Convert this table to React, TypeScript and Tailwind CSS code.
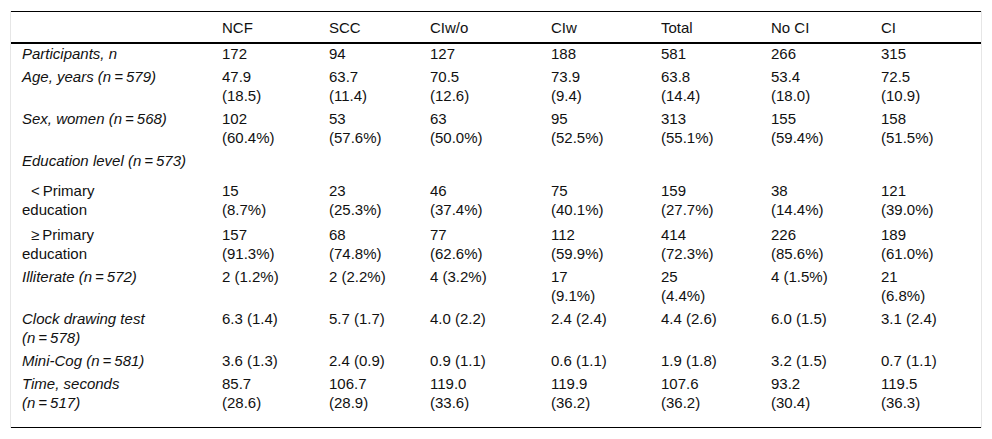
import React from "react";

type Row = {
  label: string[];
  italic: boolean;
  indent?: boolean;
  span?: boolean;
  extra?: boolean;
  cells?: string[][];
};

const T = "\u2009";

const rows: Row[] = [
  { label: ["Participants, n"], italic: true, cells: [["172"], ["94"], ["127"], ["188"], ["581"], ["266"], ["315"]] },
  {
    label: [`Age, years (n${T}=${T}579)`],
    italic: true,
    cells: [["47.9", "(18.5)"], ["63.7", "(11.4)"], ["70.5", "(12.6)"], ["73.9", "(9.4)"], ["63.8", "(14.4)"], ["53.4", "(18.0)"], ["72.5", "(10.9)"]],
  },
  {
    label: [`Sex, women (n${T}=${T}568)`],
    italic: true,
    cells: [["102", "(60.4%)"], ["53", "(57.6%)"], ["63", "(50.0%)"], ["95", "(52.5%)"], ["313", "(55.1%)"], ["155", "(59.4%)"], ["158", "(51.5%)"]],
  },
  { label: [`Education level (n${T}=${T}573)`], italic: true, span: true },
  {
    label: [`<${T}Primary`, "education"],
    italic: false,
    indent: true,
    extra: true,
    cells: [["15", "(8.7%)"], ["23", "(25.3%)"], ["46", "(37.4%)"], ["75", "(40.1%)"], ["159", "(27.7%)"], ["38", "(14.4%)"], ["121", "(39.0%)"]],
  },
  {
    label: [`\u2265${T}Primary`, "education"],
    italic: false,
    indent: true,
    cells: [["157", "(91.3%)"], ["68", "(74.8%)"], ["77", "(62.6%)"], ["112", "(59.9%)"], ["414", "(72.3%)"], ["226", "(85.6%)"], ["189", "(61.0%)"]],
  },
  {
    label: [`Illiterate (n${T}=${T}572)`],
    italic: true,
    cells: [["2 (1.2%)"], ["2 (2.2%)"], ["4 (3.2%)"], ["17", "(9.1%)"], ["25", "(4.4%)"], ["4 (1.5%)"], ["21", "(6.8%)"]],
  },
  {
    label: ["Clock drawing test", `(n${T}=${T}578)`],
    italic: true,
    cells: [["6.3 (1.4)"], ["5.7 (1.7)"], ["4.0 (2.2)"], ["2.4 (2.4)"], ["4.4 (2.6)"], ["6.0 (1.5)"], ["3.1 (2.4)"]],
  },
  {
    label: [`Mini-Cog (n${T}=${T}581)`],
    italic: true,
    cells: [["3.6 (1.3)"], ["2.4 (0.9)"], ["0.9 (1.1)"], ["0.6 (1.1)"], ["1.9 (1.8)"], ["3.2 (1.5)"], ["0.7 (1.1)"]],
  },
  {
    label: ["Time, seconds", `(n${T}=${T}517)`],
    italic: true,
    cells: [["85.7", "(28.6)"], ["106.7", "(28.9)"], ["119.0", "(33.6)"], ["119.9", "(36.2)"], ["107.6", "(36.2)"], ["93.2", "(30.4)"], ["119.5", "(36.3)"]],
  },
];

const headers = ["NCF", "SCC", "CIw/o", "CIw", "Total", "No CI", "CI"];

const grid = "grid grid-cols-[199px_107px_101px_121px_110px_110px_110px_112px]";

function Lines({ lines, indent }: { lines: string[]; indent?: boolean }) {
  return (
    <>
      {lines.map((l, i) => (
        <div key={i} className={`whitespace-pre ${indent && i === 0 ? "pl-[9px]" : ""}`}>
          {l}
        </div>
      ))}
    </>
  );
}

export default function App() {
  return (
    <div
      className="w-[992px] h-[439px] bg-white pt-[11px] pl-[10px] text-[15px] leading-[19px] text-[#111]"
      style={{ fontFamily: '"Liberation Sans", Arial, sans-serif' }}
    >
      <div className="w-[972px] border-x border-[#e6e6e6]">
        <div className={`${grid} h-[33px] items-center border-t border-black border-b-2 border-b-black`}>
          <div />
          {headers.map((h) => (
            <div key={h} className="pl-[12px]">
              {h}
            </div>
          ))}
        </div>
        <div className="border-b border-black pb-[11px]">
          {rows.map((r, i) =>
            r.span ? (
              <div key={i} className="pb-[11px] pl-[11px] italic">
                <Lines lines={r.label} />
              </div>
            ) : (
              <div key={i} className={`${grid} ${r.extra ? "pb-[6px]" : "pb-[4px]"}`}>
                <div className={`pl-[11px] ${r.italic ? "italic" : ""}`}>
                  <Lines lines={r.label} indent={r.indent} />
                </div>
                {r.cells!.map((c, j) => (
                  <div key={j} className="pl-[12px]">
                    <Lines lines={c} />
                  </div>
                ))}
              </div>
            )
          )}
        </div>
      </div>
    </div>
  );
}
